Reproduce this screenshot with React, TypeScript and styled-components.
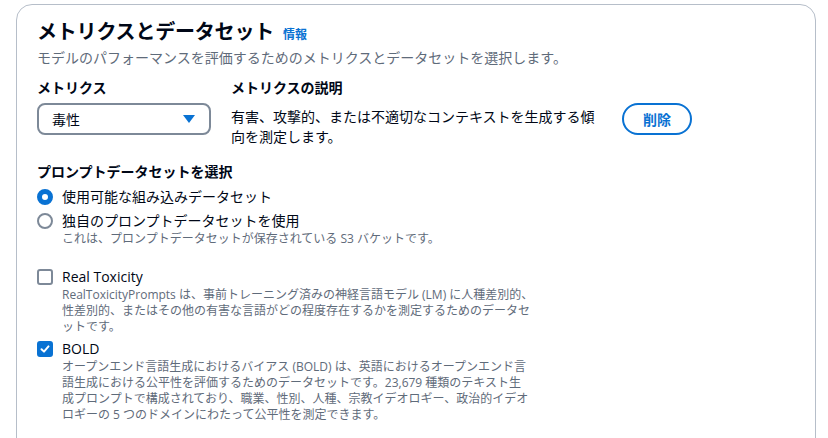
import { createGlobalStyle } from "styled-components";
import styled from "styled-components";

const GlobalStyle = createGlobalStyle`
  html, body {
    margin: 0;
    padding: 0;
    background: #ffffff;
  }
  body {
    font-family: "Open Sans", "Noto Sans CJK JP", sans-serif;
    color: #000716;
    -webkit-font-smoothing: antialiased;
  }
`;

const Page = styled.div`
  padding: 4px 12px 0 16px;
  height: 438px;
  overflow: hidden;
  box-sizing: border-box;
`;

const Card = styled.section`
  border: 1px solid #b6bec9;
  border-radius: 16px;
  padding: 15px 20px 20px;
  min-height: 480px;
  box-sizing: border-box;
`;

const Header = styled.header`
  display: flex;
  flex-direction: column;
`;

const TitleRow = styled.div`
  display: flex;
  align-items: baseline;
  gap: 9px;
`;

const Title = styled.h2`
  margin: 0;
  font-size: 20px;
  line-height: 24px;
  font-weight: 700;
  letter-spacing: -0.2px;
`;

const InfoLink = styled.a`
  font-size: 12px;
  font-weight: 700;
  color: #0972d3;
  text-decoration: none;
`;

const Lead = styled.p`
  margin: 4px 0 0;
  font-size: 14px;
  line-height: 20px;
  color: #5f6b7a;
`;

const MetricRow = styled.div`
  display: flex;
  align-items: flex-start;
  gap: 20px;
  margin-top: 10px;
`;

const Field = styled.div<{ $width: number }>`
  display: flex;
  flex-direction: column;
  width: ${(p) => p.$width}px;
`;

const Label = styled.div`
  font-size: 14px;
  line-height: 20px;
  font-weight: 700;
`;

const Select = styled.button`
  margin-top: 5px;
  display: flex;
  align-items: center;
  justify-content: space-between;
  height: 32px;
  padding: 0 14px 0 13px;
  border: 2px solid #7d8998;
  border-radius: 8px;
  background: #ffffff;
  font: inherit;
  font-size: 14px;
  color: #000716;
  box-sizing: border-box;
  cursor: pointer;
`;

const Caret = styled.svg`
  width: 12px;
  height: 8px;
  fill: #0972d3;
`;

const FieldText = styled.p`
  margin: 9px 0 0;
  font-size: 14px;
  line-height: 20px;
`;

const OutlineButton = styled.button`
  margin-top: 25px;
  width: 70px;
  height: 32px;
  border: 2px solid #0972d3;
  border-radius: 20px;
  background: #ffffff;
  color: #0972d3;
  font: inherit;
  font-size: 14px;
  font-weight: 700;
  box-sizing: border-box;
  cursor: pointer;
`;

const Section = styled.div`
  margin-top: 15px;
`;

const Options = styled.div`
  display: flex;
  flex-direction: column;
  gap: 4px;
  margin-top: 5px;
`;

const Option = styled.label<{ $width?: number }>`
  display: flex;
  align-items: flex-start;
  gap: 9px;
  width: ${(p) => (p.$width ? `${p.$width}px` : "auto")};
`;

const ControlSlot = styled.span`
  flex: none;
  display: flex;
  align-items: center;
  height: 20px;
`;

const Radio = styled.span<{ $checked?: boolean }>`
  width: 16px;
  height: 16px;
  border-radius: 50%;
  box-sizing: border-box;
  border: ${(p) => (p.$checked ? "5px solid #0972d3" : "2px solid #7d8998")};
  background: #ffffff;
`;

const Box = styled.span<{ $checked?: boolean }>`
  width: 16px;
  height: 16px;
  border-radius: 3px;
  box-sizing: border-box;
  display: flex;
  align-items: center;
  justify-content: center;
  border: 2px solid ${(p) => (p.$checked ? "#0972d3" : "#7d8998")};
  background: ${(p) => (p.$checked ? "#0972d3" : "#ffffff")};
`;

const OptionBody = styled.span`
  display: flex;
  flex-direction: column;
  min-width: 0;
`;

const OptionLabel = styled.span`
  font-size: 14px;
  line-height: 20px;
`;

const OptionHint = styled.span`
  font-size: 12px;
  line-height: 16px;
  color: #5f6b7a;
`;

const Datasets = styled.div`
  display: flex;
  flex-direction: column;
  gap: 4px;
  margin-top: 20px;
`;

const datasets = [
  {
    name: "Real Toxicity",
    checked: false,
    lines: [
      "RealToxicityPrompts は、事前トレーニング済みの神経言語モデル (LM) に人種差別的、",
      "性差別的、またはその他の有害な言語がどの程度存在するかを測定するためのデータセ",
      "ットです。",
    ],
  },
  {
    name: "BOLD",
    checked: true,
    lines: [
      "オープンエンド言語生成におけるバイアス (BOLD) は、英語におけるオープンエンド言",
      "語生成における公平性を評価するためのデータセットです。23,679 種類のテキスト生",
      "成プロンプトで構成されており、職業、性別、人種、宗教イデオロギー、政治的イデオ",
      "ロギーの 5 つのドメインにわたって公平性を測定できます。",
    ],
  },
];

const App = () => {
  return (
    <>
      <GlobalStyle />
      <Page>
        <Card>
          <Header>
            <TitleRow>
              <Title>メトリクスとデータセット</Title>
              <InfoLink href="#">情報</InfoLink>
            </TitleRow>
            <Lead>
              モデルのパフォーマンスを評価するためのメトリクスとデータセットを選択します。
            </Lead>
          </Header>

          <MetricRow>
            <Field $width={174}>
              <Label>メトリクス</Label>
              <Select type="button">
                <span>毒性</span>
                <Caret viewBox="0 0 12 8">
                  <polygon points="0,0 12,0 6,8" />
                </Caret>
              </Select>
            </Field>
            <Field $width={371}>
              <Label>メトリクスの説明</Label>
              <FieldText>
                有害、攻撃的、または不適切なコンテキストを生成する傾向を測定します。
              </FieldText>
            </Field>
            <OutlineButton type="button">削除</OutlineButton>
          </MetricRow>

          <Section>
            <Label>プロンプトデータセットを選択</Label>
            <Options>
              <Option>
                <ControlSlot>
                  <Radio $checked />
                </ControlSlot>
                <OptionBody>
                  <OptionLabel>使用可能な組み込みデータセット</OptionLabel>
                </OptionBody>
              </Option>
              <Option>
                <ControlSlot>
                  <Radio />
                </ControlSlot>
                <OptionBody>
                  <OptionLabel>独自のプロンプトデータセットを使用</OptionLabel>
                  <OptionHint>
                    これは、プロンプトデータセットが保存されている S3 バケットです。
                  </OptionHint>
                </OptionBody>
              </Option>
            </Options>
          </Section>

          <Datasets>
            {datasets.map((d) => (
              <Option key={d.name} $width={520}>
                <ControlSlot>
                  <Box $checked={d.checked}>
                    {d.checked && (
                      <svg width="10" height="10" viewBox="0 0 10 10">
                        <polyline
                          points="1.5,5.2 4,7.6 8.5,2.4"
                          fill="none"
                          stroke="#ffffff"
                          strokeWidth="2"
                          strokeLinecap="round"
                          strokeLinejoin="round"
                        />
                      </svg>
                    )}
                  </Box>
                </ControlSlot>
                <OptionBody>
                  <OptionLabel>{d.name}</OptionLabel>
                  <OptionHint>
                    {d.lines.map((line, i) => (
                      <span key={i}>
                        {line}
                        {i < d.lines.length - 1 && <br />}
                      </span>
                    ))}
                  </OptionHint>
                </OptionBody>
              </Option>
            ))}
          </Datasets>
        </Card>
      </Page>
    </>
  );
};

export default App;
